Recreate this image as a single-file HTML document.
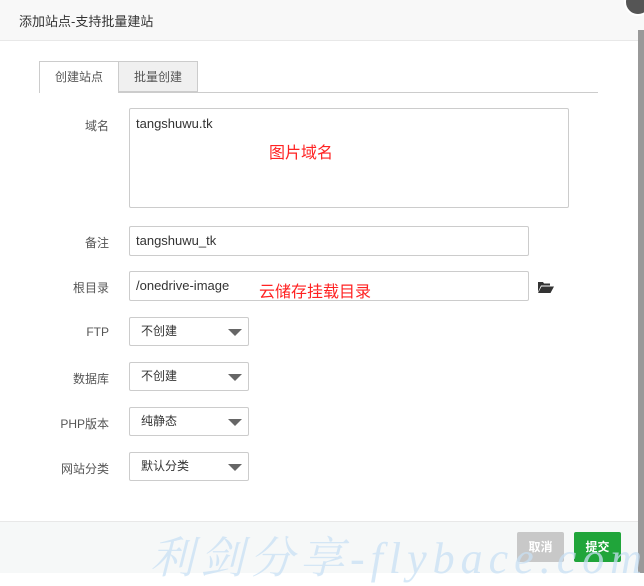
<!DOCTYPE html>
<html><head><meta charset="utf-8"><style>
*{margin:0;padding:0;box-sizing:border-box}
body{width:644px;height:573px;overflow:hidden;background:#fff;font-family:"Liberation Sans","Noto Sans CJK SC",sans-serif;position:relative;color:#555;font-size:12px}
.a{position:absolute}
.hd{left:0;top:0;width:644px;height:41px;background:#f8f8f8;border-bottom:1px solid #e8e8e8}
.lbl{width:80px;text-align:right;left:29px;font-size:12px;color:#555}
.inp{border:1px solid #ccc;border-radius:2px;padding-left:6px;font-size:13px;color:#333}
.sel{border:1px solid #ccc;border-radius:2px;width:120px;height:29px;left:129px;padding-left:11px;line-height:27px;font-size:12px;color:#333}
.sel:after{content:"";position:absolute;right:6px;top:11px;border-left:7px solid transparent;border-right:7px solid transparent;border-top:7px solid #666}
.red{color:#f22;font-size:16px}
</style></head><body>
<div class="a hd"></div>
<div class="a" style="left:19px;top:11px;font-size:13px;color:#333">添加站点-支持批量建站</div>
<div class="a" style="left:624px;top:-12px;width:28px;height:28px;border-radius:50%;background:#555;border:2px solid #fff"></div>
<div class="a" style="left:638px;top:30px;width:6px;height:543px;background:#999"></div>
<div class="a" style="left:39px;top:92px;width:559px;height:1px;background:#ccc"></div>
<div class="a" style="left:39px;top:61px;width:80px;height:32px;background:#fff;border:1px solid #ccc;border-bottom:none;text-align:center;line-height:30px;color:#555">创建站点</div>
<div class="a" style="left:118px;top:61px;width:80px;height:31px;background:#f0f0f0;border:1px solid #ccc;text-align:center;line-height:30px;color:#555">批量创建</div>
<div class="a lbl" style="top:117px">域名</div>
<div class="a inp" style="left:129px;top:108px;width:440px;height:100px;padding-top:7px">tangshuwu.tk</div>
<div class="a red" style="left:269px;top:139px">图片域名</div>
<div class="a lbl" style="top:234px">备注</div>
<div class="a inp" style="left:129px;top:226px;width:400px;height:30px;line-height:28px">tangshuwu_tk</div>
<div class="a lbl" style="top:279px">根目录</div>
<div class="a inp" style="left:129px;top:271px;width:400px;height:30px;line-height:28px">/onedrive-image</div>
<div class="a red" style="left:259px;top:278px">云储存挂载目录</div>
<svg class="a" style="left:538px;top:281px" width="16" height="12" viewBox="0 0 16 12"><path d="M0 1h5l1 1.5h6v2H3L0 11z M3.5 5.5H16L12.5 12H0z" fill="#333"/></svg>
<div class="a lbl" style="top:325px">FTP</div>
<div class="a sel" style="top:317px">不创建</div>
<div class="a lbl" style="top:370px">数据库</div>
<div class="a sel" style="top:362px">不创建</div>
<div class="a lbl" style="top:415px">PHP版本</div>
<div class="a sel" style="top:407px">纯静态</div>
<div class="a lbl" style="top:460px">网站分类</div>
<div class="a sel" style="top:452px">默认分类</div>
<div class="a" style="left:0;top:521px;width:638px;height:52px;background:#f6f8f8;border-top:1px solid #e8e8e8"></div>
<div class="a" style="left:517px;top:532px;width:47px;height:30px;background:#c8c8c8;border-radius:2px;color:#fff;text-align:center;line-height:30px;font-weight:bold">取消</div>
<div class="a" style="left:574px;top:532px;width:47px;height:30px;background:#20a53a;border-radius:2px;color:#fff;text-align:center;line-height:30px;font-weight:bold">提交</div>
<div class="a" style="left:150px;top:522px;font-size:44px;color:rgba(200,224,244,0.75);font-family:'Liberation Serif','Noto Serif CJK SC',serif;font-style:italic;letter-spacing:6px;white-space:nowrap">利剑分享-flybace.com</div>
</body></html>
